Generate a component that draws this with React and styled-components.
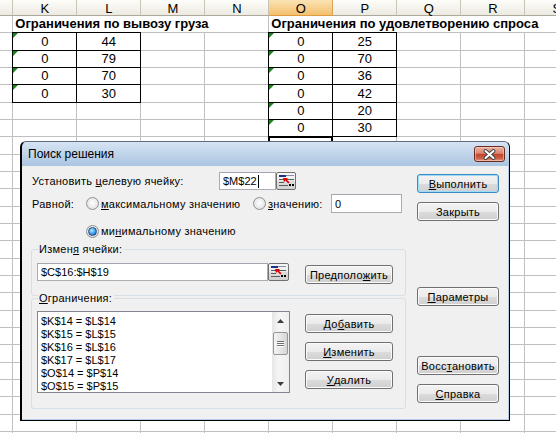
import React from 'react';
import styled, { createGlobalStyle } from 'styled-components';

const GlobalStyle = createGlobalStyle`
  html, body { margin: 0; padding: 0; background: #fff; }
  body { overflow: hidden; }
  * { box-sizing: border-box; }
`;

const ROW = 17.33;

const Screen = styled.div`
  position: relative;
  width: 556px;
  height: 433px;
  overflow: hidden;
  background: #fff;
  font-family: "Liberation Sans", Arial, sans-serif;
`;

/* ---------- spreadsheet ---------- */

const Sheet = styled.div`
  display: grid;
  grid-template-columns: 13.33px repeat(9, 64px);
  grid-template-rows: 16px repeat(25, ${ROW}px);
  font-size: 13px;
  color: #000;
`;

const ColHead = styled.div`
  display: flex;
  align-items: center;
  justify-content: center;
  padding-top: 1px;
  background: ${p => (p.$active ? 'linear-gradient(#fbe3b4, #f4c06e)' : 'linear-gradient(#fdfdfa, #eceae1)')};
  border-right: 1px solid ${p => (p.$active ? '#d9a355' : '#c8c5b7')};
  border-bottom: 1px solid ${p => (p.$active ? '#e09b3f' : '#aca899')};
`;

const Cell = styled.div`
  border-right: 1px solid #c0c0c0;
  border-bottom: 1px solid #c0c0c0;
`;

const TitleCell = styled.div`
  grid-column: span ${p => p.$span};
  display: flex;
  align-items: flex-end;
  padding: 0 0 1px 2px;
  border-bottom: 1px solid #c0c0c0;
  border-right: ${p => (p.$open ? 'none' : '1px solid #c0c0c0')};
  font-weight: bold;
  white-space: nowrap;
`;

const Block = styled.div`
  grid-column: ${p => p.$col} / span 2;
  grid-row: 3 / span ${p => p.$rows};
  margin: -1px 0 0 -1px;
  display: grid;
  grid-template-columns: 64px 64px;
  grid-auto-rows: ${ROW}px;
  border-top: 1px solid #000;
  border-left: 1px solid #000;
  background: #fff;
  position: relative;
  z-index: 1;
`;

const DataCell = styled.div`
  position: relative;
  display: flex;
  align-items: flex-end;
  justify-content: center;
  padding-bottom: 1px;
  border-right: 1px solid #000;
  border-bottom: 1px solid #000;

  &::before {
    content: '';
    display: ${p => (p.$flag ? 'block' : 'none')};
    position: absolute;
    left: 0;
    top: 0;
    border-top: 5px solid #0f8a17;
    border-right: 5px solid transparent;
  }
`;

const ActiveCell = styled.div`
  grid-column: 6;
  grid-row: 9;
  margin: -1px 0 0 -1px;
  border: 2px solid #000;
  position: relative;
  z-index: 2;
`;

/* ---------- dialog ---------- */

const Dialog = styled.div`
  position: absolute;
  left: 20px;
  top: 141px;
  width: 490px;
  height: 280px;
  z-index: 5;
  display: flex;
  flex-direction: column;
  border: 1px solid #000;
  border-left-width: 2px;
  border-top-color: #5d6b7c;
  border-radius: 6px 6px 0 0;
  background: linear-gradient(#d6e4f3 0, #aac4e1 24px, #b5cde8 24px);
  font-size: 11px;
  letter-spacing: 0.25px;
  color: #000;
`;

const TitleBar = styled.div`
  height: 24px;
  flex: none;
  display: flex;
  align-items: center;
  justify-content: space-between;
  padding: 0 4px 0 6px;
`;

const Title = styled.span`
  font-size: 12px;
  letter-spacing: 0;
`;

const CloseButton = styled.div`
  width: 31px;
  height: 16px;
  display: flex;
  align-items: center;
  justify-content: center;
  border: 1px solid #6b2b20;
  border-radius: 3px;
  background: linear-gradient(#eab2a2 0%, #d98670 45%, #c5452d 52%, #cc5e45 80%, #e49a82 100%);
  box-shadow: inset 0 0 0 1px rgba(255, 220, 210, 0.5);
`;

const Body = styled.div`
  flex: 1;
  margin: 0 1px 1px 0;
  background: #f0f0f0;
  display: grid;
  grid-template-columns: 375px 82px;
  column-gap: 11px;
  padding: 0 9px;
`;

const LeftCol = styled.div`
  display: flex;
  flex-direction: column;
  padding-top: 6px;
`;

const RightCol = styled.div`
  display: flex;
  flex-direction: column;
  padding-top: 8px;
`;

const Row = styled.div`
  display: flex;
  align-items: center;
  height: ${p => p.$h}px;
  margin-top: ${p => p.$mt || 0}px;
  padding-left: ${p => p.$pl || 1}px;
`;

const Label = styled.span`
  width: ${p => p.$w}px;
  flex: none;
  white-space: nowrap;
`;

const Key = styled.span`
  text-decoration: underline;
  text-underline-offset: 1px;
`;

const Option = styled.span`
  width: ${p => p.$w}px;
  flex: none;
  display: flex;
  align-items: center;
  gap: 2px;
  white-space: nowrap;
`;

const Radio = styled.span`
  width: 13px;
  height: 13px;
  flex: none;
  border-radius: 50%;
  border: 1px solid #8f9090;
  background: radial-gradient(circle at 50% 45%, #ffffff 0, #ececec 50%, #d2d2d2 100%);
  display: flex;
  align-items: center;
  justify-content: center;

  &::after {
    content: '';
    display: ${p => (p.$checked ? 'block' : 'none')};
    width: 7px;
    height: 7px;
    border-radius: 50%;
    border: 1px solid #1a4f8c;
    background: radial-gradient(circle at 40% 35%, #b5ecff 0, #3f9ae6 55%, #1558a6 100%);
  }
`;

const TextBox = styled.div`
  width: ${p => p.$w}px;
  height: ${p => p.$h || 18}px;
  flex: none;
  display: flex;
  align-items: center;
  padding-left: 3px;
  border: 1px solid #abadb3;
  border-top-color: #a3a6ae;
  background: #fff;
  white-space: nowrap;
  letter-spacing: 0;
`;

const Caret = styled.span`
  width: 1px;
  height: 13px;
  margin-left: 1px;
  background: #000;
`;

const RefButton = styled.div`
  width: ${p => p.$w || 20}px;
  height: 18px;
  flex: none;
  display: flex;
  align-items: center;
  justify-content: center;
  border: 1px solid #707070;
  border-radius: 2px;
  background: linear-gradient(#f6f6f6, #ebebeb 50%, #dddddd 51%, #d2d2d2);
`;

const Button = styled.div`
  width: ${p => p.$w || 82}px;
  height: 19px;
  flex: none;
  margin-top: ${p => p.$mt || 0}px;
  display: flex;
  align-items: center;
  justify-content: center;
  border: 1px solid ${p => (p.$primary ? '#3c8ac4' : '#707070')};
  border-radius: 3px;
  background: linear-gradient(#f3f3f3 0%, #ebebeb 50%, #dcdcdc 51%, #cfcfcf 100%);
  box-shadow: inset 0 0 0 1px ${p => (p.$primary ? '#9bdcf8' : '#fbfbfb')};
  white-space: nowrap;
`;

const Group = styled.fieldset`
  margin: ${p => p.$mt}px 0 0;
  padding: ${p => p.$pt}px 5px ${p => p.$pb}px;
  border: 1px solid #d5dfe5;
  border-radius: 3px;
  min-width: 0;
`;

const Legend = styled.legend`
  padding: 0 2px 0 1px;
  margin-left: 1px;
  line-height: 13px;
  background: #f0f0f0;
`;

const GroupRow = styled.div`
  display: flex;
  align-items: flex-start;
`;

const ButtonStack = styled.div`
  display: flex;
  flex-direction: column;
  gap: 9px;
  margin-left: ${p => p.$ml}px;
  padding-top: ${p => p.$pt || 0}px;
`;

const ListBox = styled.div`
  width: 253px;
  height: 82px;
  flex: none;
  display: flex;
  border: 1px solid #828790;
  background: #fff;
`;

const ListItems = styled.div`
  flex: 1;
  padding: 3px 0 0 3px;
  line-height: 13px;
  letter-spacing: 0;
  white-space: nowrap;
  overflow: hidden;
`;

const ScrollBar = styled.div`
  width: 17px;
  flex: none;
  display: flex;
  flex-direction: column;
  align-items: center;
  background: linear-gradient(90deg, #e6e6e6, #f5f5f5 40%, #efefef);
`;

const ScrollArrow = styled.div`
  width: 17px;
  height: 17px;
  display: flex;
  align-items: center;
  justify-content: center;
`;

const Thumb = styled.div`
  width: 15px;
  height: 23px;
  margin-top: 3px;
  display: flex;
  flex-direction: column;
  align-items: center;
  justify-content: center;
  gap: 1px;
  border: 1px solid #979797;
  border-radius: 2px;
  background: linear-gradient(90deg, #f4f4f4, #e6e6e6 50%, #d6d6d6);
`;

const Grip = styled.span`
  width: 7px;
  height: 1px;
  background: #6f6f6f;
  box-shadow: 0 1px 0 #fff;
`;

const Spacer = styled.div`
  flex: 1;
`;

const RefIcon = () => (
  <svg width="15" height="12" viewBox="0 0 15 12">
    <rect x="0" y="0" width="7" height="2" fill="#1d2f8c" />
    <rect x="7" y="0" width="8" height="1" fill="#8490ad" />
    <rect x="0" y="4" width="15" height="1" fill="#5b5b5b" />
    <rect x="0" y="7" width="5" height="1" fill="#5b5b5b" />
    <rect x="0" y="10" width="9" height="1" fill="#5b5b5b" />
    <path d="M4 3 H9 L7.6 4.4 L10.5 7.3 L9.3 8.5 L6.4 5.6 L5 7 Z" fill="#e10000" />
    <rect x="10" y="9" width="2" height="2" fill="#000" />
    <rect x="13" y="9" width="2" height="2" fill="#000" />
  </svg>
);

const CloseIcon = () => (
  <svg width="13" height="11" viewBox="0 0 13 11">
    <path d="M2.5 2 L10.5 9 M10.5 2 L2.5 9" stroke="#404040" strokeWidth="3.8" strokeLinecap="round" />
    <path d="M2.5 2 L10.5 9 M10.5 2 L2.5 9" stroke="#fff" strokeWidth="2" strokeLinecap="round" />
  </svg>
);

const Arrow = ({ down }) => (
  <svg width="7" height="4" viewBox="0 0 7 4">
    <polygon points={down ? '0,0 7,0 3.5,4' : '0,4 7,4 3.5,0'} fill="#3c3c3c" />
  </svg>
);

const columns = ['', 'K', 'L', 'M', 'N', 'O', 'P', 'Q', 'R', 'S'];
const supply = [44, 79, 70, 30];
const demand = [25, 70, 36, 42, 20, 30];
const constraints = [
  '$K$14 = $L$14',
  '$K$15 = $L$15',
  '$K$16 = $L$16',
  '$K$17 = $L$17',
  '$O$14 = $P$14',
  '$O$15 = $P$15',
];

const plainCount = 24 * 10 - supply.length * 2 - demand.length * 2 - 1;

const DataBlock = ({ col, values }) => (
  <Block $col={col} $rows={values.length}>
    {values.map((v, i) => (
      <React.Fragment key={i}>
        <DataCell $flag>0</DataCell>
        <DataCell>{v}</DataCell>
      </React.Fragment>
    ))}
  </Block>
);

export default function App() {
  return (
    <Screen>
      <GlobalStyle />
      <Sheet>
        {columns.map(c => (
          <ColHead key={c || 'J'} $active={c === 'O'}>{c}</ColHead>
        ))}
        <Cell />
        <TitleCell $span={4}>Ограничения по вывозу груза</TitleCell>
        <TitleCell $span={5} $open>Ограничения по удовлетворению спроса</TitleCell>
        <DataBlock col={2} values={supply} />
        <DataBlock col={6} values={demand} />
        <ActiveCell />
        {Array.from({ length: plainCount }, (_, i) => (
          <Cell key={i} />
        ))}
      </Sheet>

      <Dialog>
        <TitleBar>
          <Title>Поиск решения</Title>
          <CloseButton>
            <CloseIcon />
          </CloseButton>
        </TitleBar>
        <Body>
          <LeftCol>
            <Row $h={18}>
              <Label $w={187}>
                Установить <Key>ц</Key>елевую ячейку:
              </Label>
              <TextBox $w={57}>
                $M$22<Caret />
              </TextBox>
              <RefButton>
                <RefIcon />
              </RefButton>
            </Row>
            <Row $h={19} $mt={4}>
              <Label $w={54}>Равной:</Label>
              <Option $w={167}>
                <Radio />
                <span>
                  <Key>м</Key>аксимальному значению
                </span>
              </Option>
              <Option $w={78}>
                <Radio />
                <span>
                  <Key>з</Key>начению:
                </span>
              </Option>
              <TextBox $w={71} $h={19}>0</TextBox>
            </Row>
            <Row $h={14} $mt={11} $pl={55}>
              <Option $w={200}>
                <Radio $checked />
                <span>
                  ми<Key>н</Key>имальному значению
                </span>
              </Option>
            </Row>

            <Group $mt={5} $pt={7} $pb={11}>
              <Legend>
                Измен<Key>я</Key> ячейки:
              </Legend>
              <GroupRow>
                <TextBox $w={231}>$C$16:$H$19</TextBox>
                <RefButton $w={21}>
                  <RefIcon />
                </RefButton>
                <ButtonStack $ml={16} $pt={2}>
                  <Button $w={88}>
                    Предполо<Key>ж</Key>ить
                  </Button>
                </ButtonStack>
              </GroupRow>
            </Group>

            <Group $mt={-4} $pt={6} $pb={15}>
              <Legend>
                <Key>О</Key>граничения:
              </Legend>
              <GroupRow>
                <ListBox>
                  <ListItems>
                    {constraints.map(c => (
                      <div key={c}>{c}</div>
                    ))}
                  </ListItems>
                  <ScrollBar>
                    <ScrollArrow>
                      <Arrow />
                    </ScrollArrow>
                    <Thumb>
                      <Grip />
                      <Grip />
                      <Grip />
                    </Thumb>
                    <Spacer />
                    <ScrollArrow>
                      <Arrow down />
                    </ScrollArrow>
                  </ScrollBar>
                </ListBox>
                <ButtonStack $ml={15} $pt={3}>
                  <Button $w={88}>
                    До<Key>б</Key>авить
                  </Button>
                  <Button $w={88}>
                    <Key>И</Key>зменить
                  </Button>
                  <Button $w={88}>
                    <Key>У</Key>далить
                  </Button>
                </ButtonStack>
              </GroupRow>
            </Group>
          </LeftCol>

          <RightCol>
            <Button $primary>
              <Key>В</Key>ыполнить
            </Button>
            <Button $mt={9}>Закрыть</Button>
            <Button $mt={66}>
              <Key>П</Key>араметры
            </Button>
            <Button $mt={50}>
              Восс<Key>т</Key>ановить
            </Button>
            <Button $mt={9}>
              <Key>С</Key>правка
            </Button>
          </RightCol>
        </Body>
      </Dialog>
    </Screen>
  );
}
